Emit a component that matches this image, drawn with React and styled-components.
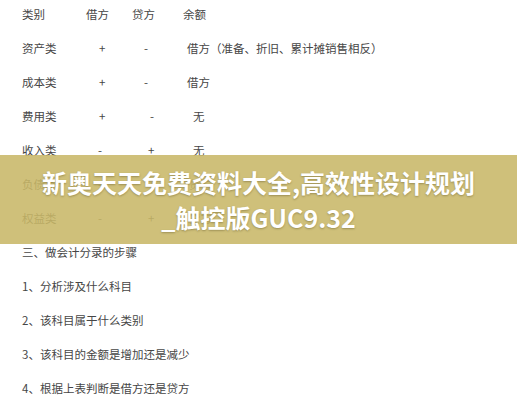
import React from 'react'
import styled, { createGlobalStyle } from 'styled-components'

const GlobalStyle = createGlobalStyle`
  html, body {
    margin: 0;
    padding: 0;
    background: #fff;
  }
  body {
    width: 517px;
    height: 400px;
    overflow: hidden;
  }
`

const Page = styled.div`
  position: relative;
  width: 517px;
  height: 400px;
  background: #fff;
  overflow: hidden;
  font-family: "Noto Sans CJK SC", "Noto Sans", sans-serif;
`

const Doc = styled.div`
  padding: 3px 0 0 22px;
  font-size: 11.5px;
  color: #464646;
`

const Row = styled.div`
  display: grid;
  grid-template-columns: 64px 46px 51px 1fr;
  height: 34px;
  line-height: 22px;
  white-space: nowrap;
`

const Cell = styled.span`
  padding-left: ${p => p.$indent || 0}px;
`

const Line = styled.div`
  height: 34px;
  line-height: 22px;
  white-space: nowrap;
`

const Banner = styled.div`
  position: absolute;
  top: 155px;
  left: 0;
  right: 0;
  height: 89px;
  box-sizing: border-box;
  padding-top: 10px;
  background: rgba(200, 183, 104, 0.88);
  text-align: center;
`

const Title = styled.h1`
  margin: 0;
  font-family: "Noto Sans CJK SC", "Noto Sans", sans-serif;
  font-weight: 700;
  font-size: 25px;
  line-height: 35px;
  color: #fff;
  text-shadow: 0 1px 2px rgba(80, 70, 30, 0.4);
`

const rows = [
  ['资产类', ['+', 13], ['-', 12], ['借方（准备、折旧、累计摊销售相反）', 4]],
  ['成本类', ['+', 13], ['-', 12], ['借方', 4]],
  ['费用类', ['+', 13], ['-', 18], ['无', 10]],
  ['收入类', ['-', 12], ['+', 16], ['无', 10]],
  ['负债类', ['-', 12], ['+', 16], ['贷方', 6]],
  ['权益类', ['-', 12], ['+', 16], ['贷方', 6]],
]

const steps = [
  '三、做会计分录的步骤',
  '1、分析涉及什么科目',
  '2、该科目属于什么类别',
  '3、该科目的金额是增加还是减少',
  '4、根据上表判断是借方还是贷方',
]

export default function App() {
  return (
    <Page>
      <GlobalStyle />
      <Doc>
        <Row>
          <Cell>类别</Cell>
          <Cell>借方</Cell>
          <Cell>贷方</Cell>
          <Cell>余额</Cell>
        </Row>
        {rows.map(([name, dr, cr, bal]) => (
          <Row key={name}>
            <Cell>{name}</Cell>
            <Cell $indent={dr[1]}>{dr[0]}</Cell>
            <Cell $indent={cr[1]}>{cr[0]}</Cell>
            <Cell $indent={bal[1]}>{bal[0]}</Cell>
          </Row>
        ))}
        {steps.map(s => (
          <Line key={s}>{s}</Line>
        ))}
      </Doc>
      <Banner>
        <Title>
          新奥天天免费资料大全,高效性设计规划
          <br />
          _触控版GUC9.32
        </Title>
      </Banner>
    </Page>
  )
}
